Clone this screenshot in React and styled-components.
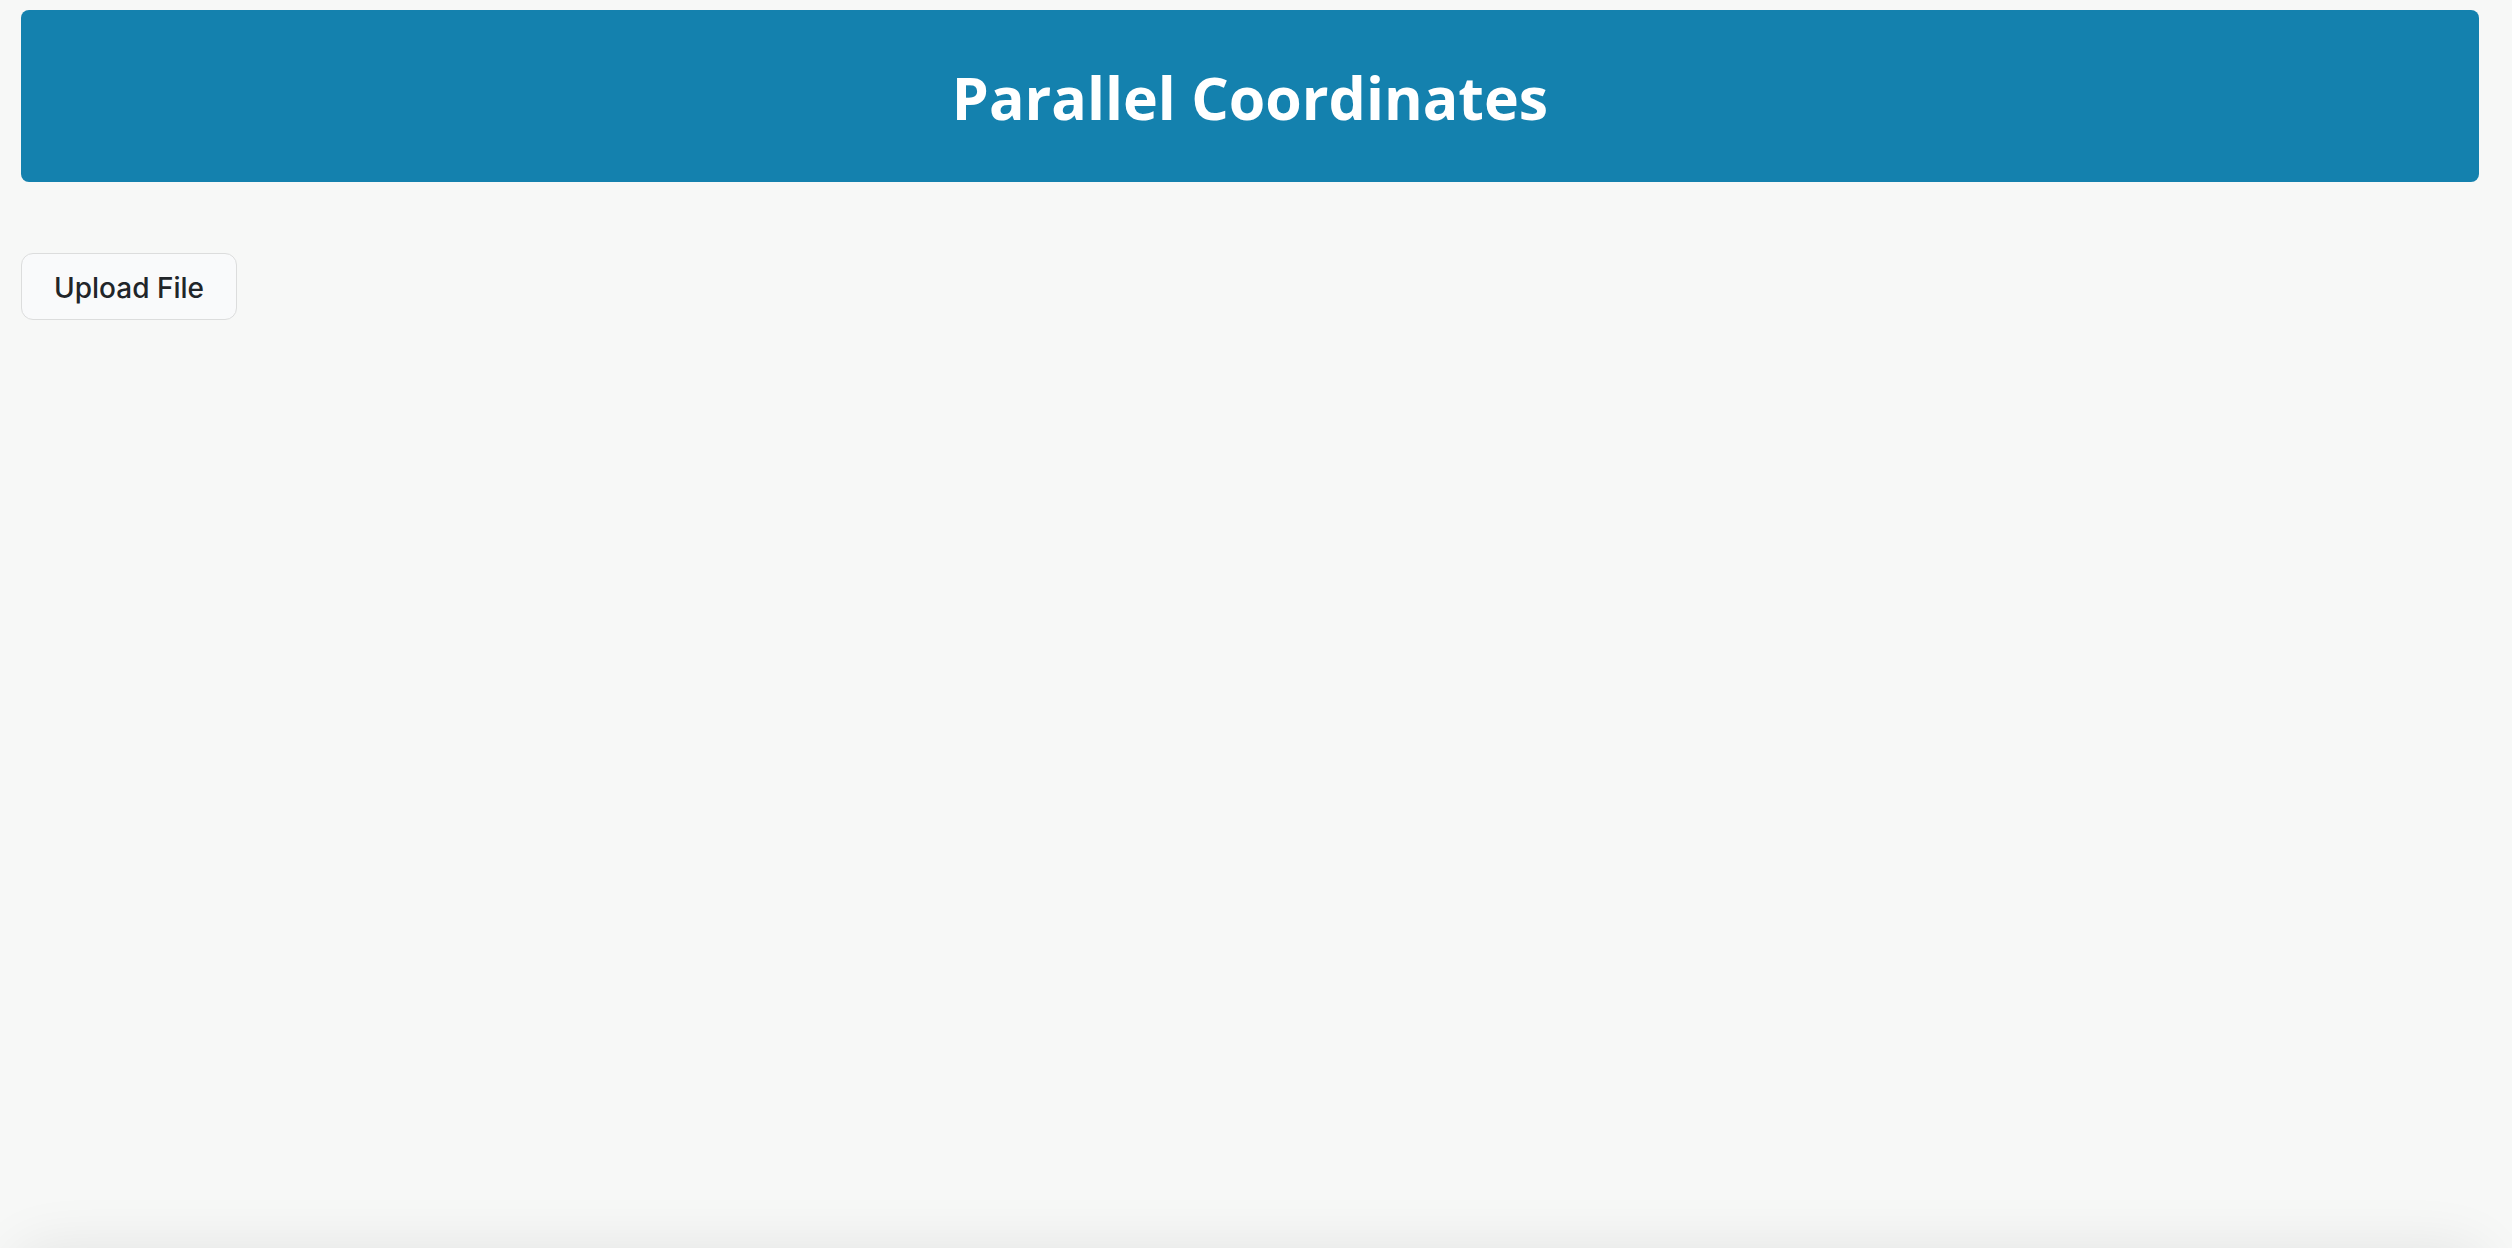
import React from "react";
import styled, { createGlobalStyle } from "styled-components";

const GlobalStyle = createGlobalStyle`
  html, body {
    margin: 0;
    padding: 0;
    background: #f7f8f7;
    font-family: Inter, "Noto Sans", sans-serif;
  }
`;

const Page = styled.div`
  padding: 10px 33px 0 21px;
  display: flex;
  flex-direction: column;
  align-items: flex-start;
`;

const Header = styled.header`
  align-self: stretch;
  height: 172px;
  background: #1481ae;
  border-radius: 8px;
  display: flex;
  align-items: center;
  justify-content: center;
`;

const Title = styled.h1`
  margin: 0;
  color: #ffffff;
  font-family: "Open Sans", "DejaVu Sans", sans-serif;
  font-weight: 700;
  font-size: 59px;
  line-height: 1;
  padding-top: 2px;
`;

const UploadButton = styled.button`
  margin-top: 71px;
  width: 216px;
  height: 67px;
  padding: 3px 0 0;
  background: #f9fafb;
  border: 1.5px solid #dcdddd;
  border-radius: 12px;
  color: #212529;
  font-family: Inter, "Noto Sans", sans-serif;
  font-size: 28px;
  font-weight: 500;
  cursor: pointer;
`;

const ChartPanel = styled.section`
  align-self: stretch;
  margin-top: 935px;
  height: 500px;
  background: #f7f8f7;
  border-radius: 24px;
  box-shadow: 0 0 60px 6px rgba(0, 0, 0, 0.09);
`;

const App = () => {
  return (
    <>
      <GlobalStyle />
      <Page>
        <Header>
          <Title>Parallel Coordinates</Title>
        </Header>
        <UploadButton>Upload File</UploadButton>
        <ChartPanel />
      </Page>
    </>
  );
};

export default App;
